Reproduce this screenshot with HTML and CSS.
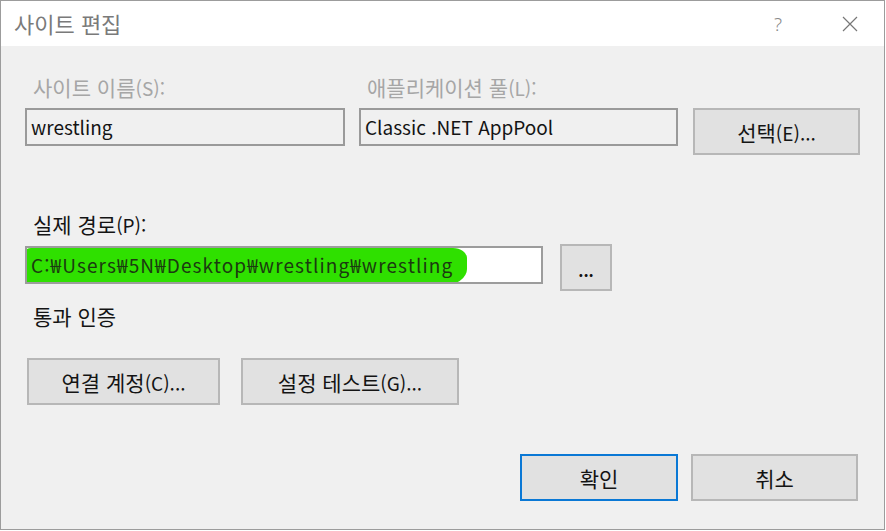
FILE: index.html
```html
<!DOCTYPE html>
<html lang="ko">
<head>
<meta charset="utf-8">
<title>사이트 편집</title>
<link rel="stylesheet" href="styles.css">
</head>
<body>
<div class="dialog">
  <div class="titlebar">
    <span class="title">사이트 편집</span>
    <div class="title-actions">
      <span class="help">?</span>
      <svg class="close" width="16" height="16" viewBox="0 0 16 16"><path d="M1 1L15 15M15 1L1 15" stroke="#777" stroke-width="1.2" fill="none"/></svg>
    </div>
  </div>
  <div class="content">
    <div class="row row-top">
      <div class="col col-name">
        <div class="label disabled">사이트 이름<span class="lat">(S):</span></div>
        <div class="field field-disabled">wrestling</div>
      </div>
      <div class="col col-pool">
        <div class="label disabled">애플리케이션 풀<span class="lat">(L):</span></div>
        <div class="field field-disabled">Classic .NET AppPool</div>
      </div>
      <div class="col col-btn">
        <button class="btn btn-select">선택<span class="lat">(E)...</span></button>
      </div>
    </div>

    <div class="label label-path">실제 경로<span class="lat">(P):</span></div>
    <div class="row row-path">
      <div class="field field-path">
        <span class="marker"></span>
        <span class="path-text">C:₩Users₩5N₩Desktop₩wrestling₩wrestling</span>
      </div>
      <button class="btn btn-browse">...</button>
    </div>

    <div class="label label-auth">통과 인증</div>

    <div class="row row-auth">
      <button class="btn btn-connect">연결 계정<span class="lat">(C)...</span></button>
      <button class="btn btn-test">설정 테스트<span class="lat">(G)...</span></button>
    </div>

    <div class="row row-footer">
      <button class="btn btn-ok">확인</button>
      <button class="btn btn-cancel">취소</button>
    </div>
  </div>
</div>
</body>
</html>
```

FILE: styles.css
```css
* { box-sizing: border-box; }
html, body { margin: 0; padding: 0; background: #ffffff; }
body {
  font-family: "Noto Sans CJK KR", "Noto Sans", sans-serif;
  color: #141414;
}
.dialog {
  width: 885px;
  height: 530px;
  border: 1px solid #9c9c9c;
  background: #f0f0f0;
  display: flex;
  flex-direction: column;
}
.titlebar {
  height: 45px;
  background: #ffffff;
  display: flex;
  align-items: center;
  justify-content: space-between;
  padding-left: 13px;
  flex: none;
}
.title {
  font-size: 22px;
  color: #7a7a7a;
  margin-top: -1px;
}
.title-actions {
  display: flex;
  align-items: center;
}
.help {
  font-size: 19px;
  color: #8a8a8a;
  margin-right: 60px;
  font-family: "Noto Sans", sans-serif;
  font-weight: 300;
}
.close { margin-right: 26px; }

.content {
  padding: 0 0 0 24px;
  display: flex;
  flex-direction: column;
}
.row { display: flex; }
.row-top { margin-top: 28px; }
.col { display: flex; flex-direction: column; }
.col-name { width: 320px; margin-right: 14px; }
.col-pool { width: 319px; margin-right: 15px; }
.col-btn { justify-content: flex-start; padding-top: 34px; }

.lat { font-size: 19px; }

.label {
  font-size: 21px;
  line-height: 26px;
  padding-left: 8px;
  height: 26px;
  white-space: nowrap;
}
.disabled { color: #a6a6a6; }
.field {
  height: 38px;
  border: 2px solid #a2a2a2;
  margin-top: 8px;
  font-size: 19px;
  line-height: 33px;
  padding-left: 4px;
  white-space: nowrap;
  overflow: hidden;
}
.field-disabled {
  background: #f0f0f0;
  border-color: #9a9a9a;
}
.btn {
  font-family: "Noto Sans CJK KR", "Noto Sans", sans-serif;
  font-size: 21px;
  color: #141414;
  background: #e1e1e1;
  border: 2px solid #b7b7b7;
  height: 47px;
  padding: 0;
  margin: 0;
  white-space: nowrap;
}
.btn-select { width: 167px; }

.label-path { margin-top: 56px; }
.row-path { margin-top: 7px; align-items: flex-start; }
.field-path {
  position: relative;
  width: 518px;
  margin-top: 2px;
  background: #ffffff;
  border-color: #9c9c9c;
  padding-left: 4px;
}
.marker {
  position: absolute;
  left: -2px;
  top: 0;
  width: 442px;
  height: 37px;
  background: #2fe000;
  border-radius: 6px 14px 22px 4px / 4px 10px 16px 6px;
}
.path-text {
  position: relative;
  color: #1b3a10;
  letter-spacing: 1.1px;
}
.btn-browse {
  width: 52px;
  margin-left: 17px;
  font-size: 16px;
  font-weight: bold;
  line-height: 1;
  padding-top: 4px;
}

.label-auth { margin-top: 12px; }

.row-auth { margin-top: 29px; }
.btn-connect { width: 193px; margin-left: 2px; }
.btn-test { width: 218px; margin-left: 21px; }

.row-footer { margin-top: 49px; padding-left: 495px; }
.btn-ok { width: 158px; border-color: #0a78d5; }
.btn-cancel { width: 167px; margin-left: 13px; }
```
